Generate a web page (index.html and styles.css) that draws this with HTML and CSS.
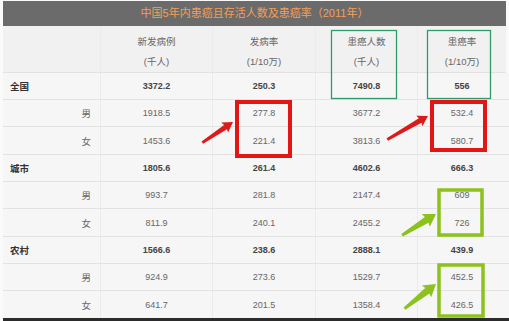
FILE: index.html
```html
<!DOCTYPE html>
<html lang="zh">
<head>
<meta charset="utf-8">
<title>中国5年内患癌且存活人数及患癌率</title>
<link rel="stylesheet" href="styles.css">
</head>
<body>
<div class="page">
  <div class="title">中国5年内患癌且存活人数及患癌率（2011年）</div>
  <div class="row head">
    <div class="cell"></div>
    <div class="cell"><span>新发病例</span><span>(千人)</span></div>
    <div class="cell"><span>发病率</span><span>(1/10万)</span></div>
    <div class="cell"><span>患癌人数</span><span>(千人)</span></div>
    <div class="cell"><span>患癌率</span><span>(1/10万)</span></div>
  </div>
  <div class="body">
    <div class="row total h27"><div class="cell lbl">全国</div><div class="cell">3372.2</div><div class="cell">250.3</div><div class="cell">7490.8</div><div class="cell">556</div></div>
    <div class="row h27"><div class="cell sub">男</div><div class="cell">1918.5</div><div class="cell">277.8</div><div class="cell">3677.2</div><div class="cell">532.4</div></div>
    <div class="row h28"><div class="cell sub">女</div><div class="cell">1453.6</div><div class="cell">221.4</div><div class="cell">3813.6</div><div class="cell">580.7</div></div>
    <div class="row total h27"><div class="cell lbl">城市</div><div class="cell">1805.6</div><div class="cell">261.4</div><div class="cell">4602.6</div><div class="cell">666.3</div></div>
    <div class="row h27"><div class="cell sub">男</div><div class="cell">993.7</div><div class="cell">281.8</div><div class="cell">2147.4</div><div class="cell">609</div></div>
    <div class="row h28"><div class="cell sub">女</div><div class="cell">811.9</div><div class="cell">240.1</div><div class="cell">2455.2</div><div class="cell">726</div></div>
    <div class="row total h27"><div class="cell lbl">农村</div><div class="cell">1566.6</div><div class="cell">238.6</div><div class="cell">2888.1</div><div class="cell">439.9</div></div>
    <div class="row h27"><div class="cell sub">男</div><div class="cell">924.9</div><div class="cell">273.6</div><div class="cell">1529.7</div><div class="cell">452.5</div></div>
    <div class="row h27 last"><div class="cell sub">女</div><div class="cell">641.7</div><div class="cell">201.5</div><div class="cell">1358.4</div><div class="cell">426.5</div></div>
  </div>
  <svg class="marks" width="509" height="321" viewBox="0 0 509 321" aria-hidden="true">
    <rect x="331.5" y="30.5" width="65" height="68" fill="none" stroke="#2f9a6c" stroke-width="1.3"/>
    <rect x="427.5" y="30.5" width="63" height="68" fill="none" stroke="#2f9a6c" stroke-width="1.3"/>
    <rect x="237" y="102" width="53" height="54" fill="none" stroke="#e31616" stroke-width="4"/>
    <rect x="432" y="102" width="53" height="48" fill="none" stroke="#e31616" stroke-width="4"/>
    <rect x="439" y="190" width="43" height="45" fill="none" stroke="#8cc21c" stroke-width="3.5"/>
    <rect x="439" y="265" width="44" height="51" fill="none" stroke="#8cc21c" stroke-width="3.5"/>
    <polygon transform="translate(233 122) rotate(-34)" fill="#dc1a1a" points="-37,-1.4 -9,-2.6 -10,-6 0,0 -10,6 -9,2.6 -37,1.4"/>
    <polygon transform="translate(428 116) rotate(-30)" fill="#dc1a1a" points="-47,-1.4 -9,-2.6 -10,-6 0,0 -10,6 -9,2.6 -47,1.4"/>
    <polygon transform="translate(436 214) rotate(-32)" fill="#8cc21c" points="-40,-1.4 -11,-3.4 -12,-7.5 0,0 -12,7.5 -11,3.4 -40,1.4"/>
    <polygon transform="translate(436 284) rotate(-38)" fill="#8cc21c" points="-40,-1.4 -11,-3.4 -12,-7.5 0,0 -12,7.5 -11,3.4 -40,1.4"/>
  </svg>
</div>
</body>
</html>
```
FILE: styles.css
```css
html, body {
  margin: 0;
  padding: 0;
  background: #fafafa;
}
.page {
  position: relative;
  width: 509px;
  height: 321px;
  box-sizing: border-box;
  padding: 1px 0 0 3px;
  background: #fafafa;
  font-family: "Liberation Sans", "Noto Sans CJK SC", sans-serif;
  color: #666;
  overflow: hidden;
}
.title {
  width: 503px;
  height: 25px;
  background: #6b6b6b;
  color: #f59f55;
  font-size: 11px;
  line-height: 25px;
  text-align: center;
}
.row {
  display: grid;
  grid-template-columns: 97px 112px 103px 102px 89px;
  box-sizing: border-box;
  border-bottom: 1px solid #e2e2e2;
  background: #f6f6f6;
}
.cell {
  display: flex;
  align-items: center;
  justify-content: center;
  font-size: 9px;
  border-left: 1px solid #ebebeb;
}
.cell:first-child {
  border-left: none;
}
.head {
  width: 503px;
  height: 47px;
  background: #f1f1f1;
}
.head .cell {
  flex-direction: column;
  justify-content: flex-start;
  padding-top: 6px;
  font-size: 9.5px;
  line-height: 20px;
  color: #666;
}
.body {
  width: 506px;
  border-right: 3px solid #2b2b2b;
  border-bottom: 3px solid #2b2b2b;
}
.h27 { height: 27px; }
.h28 { height: 28px; }
.last { border-bottom: none; }
.total .cell {
  font-weight: bold;
  color: #444;
}
.cell.lbl {
  justify-content: flex-start;
  padding-left: 7px;
  font-size: 9.5px;
  color: #333;
}
.cell.sub {
  justify-content: flex-end;
  padding-right: 9px;
  font-size: 9.5px;
}
.marks {
  position: absolute;
  left: 0;
  top: 0;
  pointer-events: none;
}
```
